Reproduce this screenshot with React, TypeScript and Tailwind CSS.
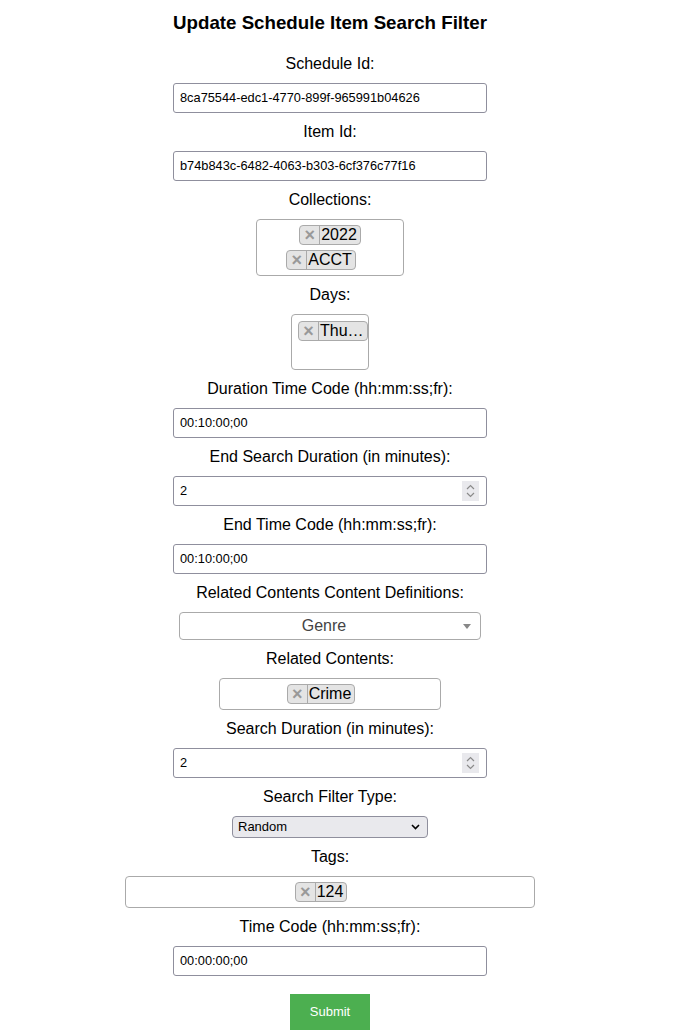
import React from 'react';

const font = { fontFamily: '"Liberation Sans", Arial, sans-serif' };

function Label({ children }: { children: React.ReactNode }) {
  return (
    <label className="block pt-[10px] pb-[10px] text-[16px] leading-[18px] text-black">
      {children}
    </label>
  );
}

function TextInput({ value }: { value: string }) {
  return (
    <div className="mx-auto flex h-[30px] w-[314px] items-center rounded-[3px] border border-[#8f8f9d] bg-white pl-[6px] text-left text-[12.8px] text-black">
      {value}
    </div>
  );
}

function NumberInput({ value }: { value: string }) {
  return (
    <div className="relative mx-auto flex h-[30px] w-[314px] items-center rounded-[3px] border border-[#8f8f9d] bg-white pl-[6px] text-left text-[12.8px] text-black">
      {value}
      <div className="absolute right-[7px] top-[4px] flex h-[20px] w-[17px] flex-col items-center justify-center bg-[#e9e9ed]">
        <svg width="9" height="16" viewBox="0 0 9 16" fill="none" stroke="#8a8a8a" strokeWidth="1.2">
          <path d="M1 6 L4.5 2.5 L8 6" />
          <path d="M1 10 L4.5 13.5 L8 10" />
        </svg>
      </div>
    </div>
  );
}

function Chip({ text }: { text: string }) {
  return (
    <span className="inline-flex h-[20px] items-center overflow-hidden rounded-[4px] border border-[#aaa] bg-[#e4e4e4] text-[16px] leading-[18px] text-black">
      <span className="flex h-full w-[20px] shrink-0 items-center justify-center border-r border-[#aaa] text-[18px] font-bold leading-none text-[#999]">
        ×
      </span>
      <span className="whitespace-nowrap pl-[1px] pr-[3px]">{text}</span>
    </span>
  );
}

function Spacer() {
  return <span className="ml-[5px] inline-block h-[20px] w-[13px]" />;
}

export default function App() {
  return (
    <div className="w-[660px] bg-white text-center" style={font}>
      <h3 className="mt-[12px] mb-[11px] text-[18.72px] font-bold leading-[22px] text-black">
        Update Schedule Item Search Filter
      </h3>

      <Label>Schedule Id:</Label>
      <TextInput value="8ca75544-edc1-4770-899f-965991b04626" />

      <Label>Item Id:</Label>
      <TextInput value="b74b843c-6482-4063-b303-6cf376c77f16" />

      <Label>Collections:</Label>
      <div className="mx-auto flex h-[57px] w-[148px] flex-col items-center gap-[5px] rounded-[4px] border border-[#aaa] bg-white pt-[5px]">
        <div className="flex">
          <Chip text="2022" />
        </div>
        <div className="flex">
          <Chip text="ACCT" />
          <Spacer />
        </div>
      </div>

      <Label>Days:</Label>
      <div className="mx-auto h-[56px] w-[78px] overflow-hidden rounded-[4px] border border-[#aaa] bg-white pl-[6px] pt-[5px] text-left">
        <Chip text="Thu…" />
      </div>

      <Label>Duration Time Code (hh:mm:ss;fr):</Label>
      <TextInput value="00:10:00;00" />

      <Label>End Search Duration (in minutes):</Label>
      <NumberInput value="2" />

      <Label>End Time Code (hh:mm:ss;fr):</Label>
      <TextInput value="00:10:00;00" />

      <Label>Related Contents Content Definitions:</Label>
      <div className="relative mx-auto flex h-[28px] w-[302px] items-center justify-center rounded-[4px] border border-[#aaa] bg-white pl-[8px] pr-[20px] text-[16px] text-[#444]">
        Genre
        <span className="absolute right-[9px] top-[11px] h-0 w-0 border-x-[4px] border-t-[5px] border-x-transparent border-t-[#888]" />
      </div>

      <Label>Related Contents:</Label>
      <div className="mx-auto flex h-[32px] w-[222px] items-start justify-center rounded-[4px] border border-[#aaa] bg-white pt-[5px]">
        <Chip text="Crime" />
        <Spacer />
      </div>

      <Label>Search Duration (in minutes):</Label>
      <NumberInput value="2" />

      <Label>Search Filter Type:</Label>
      <div className="relative mx-auto flex h-[22px] w-[196px] items-center rounded-[4px] border border-[#8f8f9d] bg-[#e9e9ed] pl-[5px] text-left text-[13px] text-black">
        Random
        <svg className="absolute right-[7px] top-[7px]" width="9" height="6" viewBox="0 0 9 6" fill="none" stroke="#000" strokeWidth="1.6">
          <path d="M1 1 L4.5 4.5 L8 1" />
        </svg>
      </div>

      <Label>Tags:</Label>
      <div className="mx-auto flex h-[32px] w-[410px] items-start justify-center rounded-[4px] border border-[#aaa] bg-white pt-[5px]">
        <Chip text="124" />
        <Spacer />
      </div>

      <Label>Time Code (hh:mm:ss;fr):</Label>
      <TextInput value="00:00:00;00" />

      <button className="mx-auto mt-[18px] block h-[36px] w-[80px] bg-[#4CAF50] text-[13px] text-white">
        Submit
      </button>
    </div>
  );
}
